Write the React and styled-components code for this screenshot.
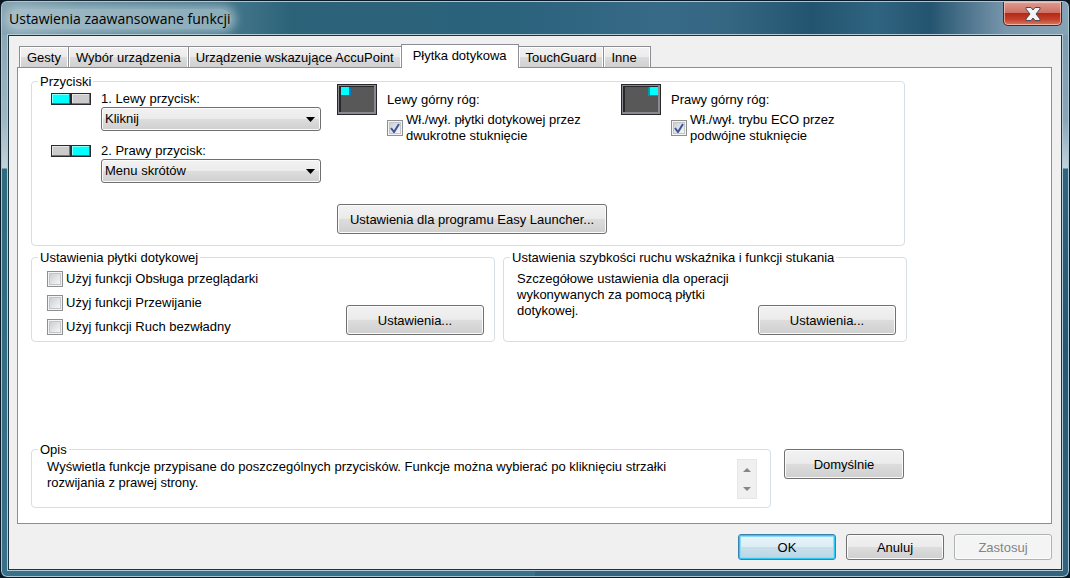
import React, { useState } from 'react'
import styled, { createGlobalStyle, css } from 'styled-components';

const TABS = ['Gesty', 'Wybór urządzenia', 'Urządzenie wskazujące AccuPoint', 'Płytka dotykowa', 'TouchGuard', 'Inne'];

const ButtonIcon = ({ side }) => (
    <svg width="40" height="12" viewBox="0 0 40 12" shapeRendering="crispEdges" aria-hidden="true">
        <rect width="40" height="12" fill="#2b2b2f" />
        {[0, 1].map(i => {
            const on = (side === 'left') === (i === 0);
            return (
                <g key={i}>
                    <rect x={1 + i * 20} y="1" width="18" height="10" fill={on ? '#0090a8' : '#77777b'} />
                    <rect x={1 + i * 20} y="1" width="17" height="9" fill={on ? '#8ff' : '#e6e6e6'} />
                    <rect x={2 + i * 20} y="2" width="16" height="8" fill={on ? '#0ff' : '#cbcbcb'} />
                </g>
            );
        })}
    </svg>
);

const PadIcon = ({ corner }) => (
    <svg width="40" height="31" viewBox="0 0 40 31" shapeRendering="crispEdges" aria-hidden="true">
        <rect width="40" height="31" fill="#28282c" />
        <rect x="1" y="1" width="38" height="29" fill="#8a8a90" />
        <rect x="2" y="2" width="35" height="26" fill="#28282c" />
        <rect x="4" y="3" width="33" height="25" fill="#585858" />
        {corner === 'left' ? (
            <>
                <rect x="4" y="3" width="10" height="9" fill="#0078b8" />
                <rect x="4" y="3" width="8" height="8" fill="#0ff" />
            </>
        ) : (
            <>
                <rect x="27" y="3" width="10" height="9" fill="#0098a8" />
                <rect x="29" y="3" width="8" height="8" fill="#0ff" />
            </>
        )}
    </svg>
);

const CloseIcon = () => (
    <svg width="16" height="14" viewBox="0 0 16 14" aria-hidden="true">
        <path
            d="M1 .5h5L8 3l2-2.500h5V2l-4 5 4 5v1.500h-5L8 11l-2 2.500H1V12l4-5-4-5z"
            fill="#f4f4f6" stroke="#4a4a58" strokeWidth="1" strokeLinejoin="round"
        />
    </svg>
);

const Check = ({ id, label, defaultChecked }) => (
    <CheckRow>
        <Checkbox id={id} defaultChecked={defaultChecked} />
        <label htmlFor={id}>{label}</label>
    </CheckRow>
);

const Assignment = ({ id, side, label, options }) => (
    <AssignmentRow>
        <ButtonIcon side={side} />
        <label htmlFor={id}>{label}</label>
        <Select id={id}>
            {options.map(o => <option key={o}>{o}</option>)}
        </Select>
    </AssignmentRow>
);

const Corner = ({ id, corner, title, label }) => (
    <CornerBox>
        <PadIcon corner={corner} />
        <CornerText>
            <p>{title}</p>
            <Check id={id} label={label} defaultChecked />
        </CornerText>
    </CornerBox>
);

export default function App() {
    const [tab, setTab] = useState(3);

    return (
        <Window>
            <GlobalStyle />
            <TitleBar>
                <Title>Ustawienia zaawansowane funkcji</Title>
                <CloseButton aria-label="Zamknij"><CloseIcon /></CloseButton>
            </TitleBar>
            <Client>
                <Tabs role="tablist">
                    {TABS.map((name, i) => (
                        <Tab key={name} role="tab" aria-selected={i === tab} $active={i === tab} onClick={() => setTab(i)}>
                            {name}
                        </Tab>
                    ))}
                </Tabs>
                <Panel role="tabpanel">
                    <ButtonsGroup>
                        <Legend>Przyciski</Legend>
                        <Assignments>
                            <Assignment id="left" side="left" label="1. Lewy przycisk:" options={['Kliknij', 'Menu skrótów']} />
                            <Assignment id="right" side="right" label="2. Prawy przycisk:" options={['Menu skrótów', 'Kliknij']} />
                        </Assignments>
                        <Corner
                            id="corner-left"
                            corner="left"
                            title="Lewy górny róg:"
                            label="Wł./wył. płytki dotykowej przez dwukrotne stuknięcie"
                        />
                        <Corner
                            id="corner-right"
                            corner="right"
                            title="Prawy górny róg:"
                            label="Wł./wył. trybu ECO przez podwójne stuknięcie"
                        />
                        <LauncherButton>Ustawienia dla programu Easy Launcher...</LauncherButton>
                    </ButtonsGroup>

                    <Row>
                        <SettingsGroup $size={464}>
                            <Legend>Ustawienia płytki dotykowej</Legend>
                            <CheckList>
                                <Check id="browse" label="Użyj funkcji Obsługa przeglądarki" />
                                <Check id="scroll" label="Użyj funkcji Przewijanie" />
                                <Check id="inertia" label="Użyj funkcji Ruch bezwładny" />
                            </CheckList>
                            <WideButton>Ustawienia...</WideButton>
                        </SettingsGroup>
                        <SettingsGroup $size={404}>
                            <Legend>Ustawienia szybkości ruchu wskaźnika i funkcji stukania</Legend>
                            <Note>Szczegółowe ustawienia dla operacji wykonywanych za pomocą płytki dotykowej.</Note>
                            <WideButton>Ustawienia...</WideButton>
                        </SettingsGroup>
                    </Row>

                    <BottomRow>
                        <DescriptionGroup>
                            <Legend>Opis</Legend>
                            <Description>
                                Wyświetla funkcje przypisane do poszczególnych przycisków. Funkcje można wybierać po kliknięciu strzałki rozwijania z prawej strony.
                            </Description>
                            <Scroller>
                                <ScrollArrow aria-label="W górę" disabled>
                                    <svg width="8" height="4" viewBox="0 0 8 4"><path d="M0 4L4 0l4 4z" fill="#85858a" /></svg>
                                </ScrollArrow>
                                <ScrollArrow aria-label="W dół" disabled>
                                    <svg width="8" height="4" viewBox="0 0 8 4"><path d="M0 0l4 4 4-4z" fill="#85858a" /></svg>
                                </ScrollArrow>
                            </Scroller>
                        </DescriptionGroup>
                        <DefaultsButton>Domyślnie</DefaultsButton>
                    </BottomRow>
                </Panel>
                <Footer>
                    <FooterButton $primary>OK</FooterButton>
                    <FooterButton>Anuluj</FooterButton>
                    <FooterButton disabled>Zastosuj</FooterButton>
                </Footer>
            </Client>
        </Window>
    );
}

const GlobalStyle = createGlobalStyle`
    * {
        box-sizing: border-box;
    }
    body {
        margin: 0;
        background: #0b1620;
        color: #000;
        font: 13px/16px "Liberation Sans", Arial, sans-serif;
    }
    p {
        margin: 0;
    }
    button, select {
        font: inherit;
        color: inherit;
    }
`;

const Window = styled.div`
    display: flex;
    flex-direction: column;
    min-height: 100vh;
    padding: 1px 7px 7px;
    border: 1px solid #0a1a26;
    border-radius: 7px;
    box-shadow: inset 0 0 0 1px #a9c6d2;
    background:
        linear-gradient(90deg, #84a2b0 0, #5f8a9b 80px, #3f7388 240px, #2d6379 290px, #2b627c 48%, #376a87 62%, #356783 68%, #23546f 76%, #2f6480 82%, #24546f 87%, #7896ac 94%, #86a2b6 100%) top / 100% 34px no-repeat,
        linear-gradient(#84a2b0 0, #9fb7c2 120px, #c3d2d9 167px, #2f6a7e 168px, #39708a 100%) left / 50% 100% no-repeat,
        linear-gradient(#7896ac 0, #8ba5b8 120px, #c3d2dc 167px, #2f6480 168px, #265673 60%, #33647f 100%) right / 50% 100% no-repeat;
`;

const TitleBar = styled.header`
    display: flex;
    justify-content: space-between;
    align-items: flex-start;
    height: 33px;
`;

const Title = styled.h1`
    margin: 7px 0 0;
    padding: 0 1px;
    border-radius: 10px;
    background: rgba(190, 210, 218, 0.6);
    box-shadow: 0 0 8px 4px rgba(190, 210, 218, 0.6);
    font: 14px/20px "Open Sans", "Noto Sans", sans-serif;
`;

const CloseButton = styled.button`
    display: flex;
    align-items: center;
    justify-content: center;
    width: 59px;
    height: 24px;
    padding: 0;
    border: 1px solid #4a2430;
    border-top: 0;
    border-radius: 0 0 5px 5px;
    box-shadow: inset 0 0 0 1px rgba(255, 220, 210, 0.6);
    background: linear-gradient(#dd9c92 0, #cf6f62 48%, #b52a16 50%, #c2402c 75%, #d87a60 100%);
`;

const Client = styled.main`
    display: flex;
    flex: 1;
    flex-direction: column;
    padding: 8px 9px 9px 8px;
    border: 1px solid #1c3340;
    outline: 1px solid #b4ccd6;
    background: #f0f0f0;
`;

const Tabs = styled.div`
    display: flex;
    align-items: flex-end;
    height: 24px;
    padding-left: 2px;
`;

const Tab = styled.button`
    height: 22px;
    margin-right: -1px;
    padding: 0 7px;
    border: 1px solid #8c8e94;
    border-bottom: 0;
    box-shadow: inset 1px 1px 0 #fff, inset -1px 0 0 #fff;
    background: linear-gradient(#f2f2f2 0, #ebebeb 50%, #dcdcdc 50%, #cfcfcf 100%);
    white-space: nowrap;

    &:last-child {
        padding-right: 13px;
    }

    ${({ $active }) => $active && css`
        position: relative;
        height: 24px;
        padding: 0 11px 2px;
        box-shadow: none;
        background: #fff;
    `}
`;

const Panel = styled.section`
    display: flex;
    flex: 1;
    flex-direction: column;
    gap: 11px;
    margin-top: -1px;
    padding: 13px 13px 15px;
    border: 1px solid #8c8e94;
    background: #fff;
`;

const Group = styled.fieldset`
    position: relative;
    min-width: 0;
    margin: 0;
    border: 1px solid #d5dfe5;
    border-radius: 4px;
`;

/* sits on the top border of its group */
const Legend = styled.legend`
    position: absolute;
    top: -8px;
    left: 6px;
    padding: 0 2px;
    background: #fff;
`;

const ButtonsGroup = styled(Group)`
    display: grid;
    grid-template-columns: 270px 1fr 1fr;
    column-gap: 16px;
    row-gap: 21px;
    max-width: 874px;
    padding: 2px 15px 11px 19px;
`;

const Assignments = styled.div`
    display: flex;
    flex-direction: column;
    gap: 12px;
    padding-top: 7px;
`;

const AssignmentRow = styled.div`
    display: grid;
    grid-template-columns: 40px 1fr;
    column-gap: 10px;
    align-items: center;
`;

const Select = styled.select`
    grid-column: 2;
    height: 24px;
    padding: 0 3px;
    border: 1px solid #707070;
    border-radius: 3px;
    box-shadow: inset 0 0 0 1px #fbfbfb;
    appearance: none;
    background:
        url("data:image/svg+xml,%3Csvg xmlns='http://www.w3.org/2000/svg' width='9' height='5'%3E%3Cpath d='M0 0h9L4.500 5z'/%3E%3C/svg%3E") right 5px center no-repeat,
        linear-gradient(#f2f2f2 0, #ebebeb 50%, #dddddd 50%, #cfcfcf 100%);
`;

const CornerBox = styled.div`
    display: flex;
    gap: 10px;

    > svg {
        flex: none;
    }
`;

const CornerText = styled.div`
    display: flex;
    flex-direction: column;
    gap: 4px;
    max-width: 260px;
    padding-top: 8px;
`;

const CheckRow = styled.div`
    display: flex;
    align-items: center;
    gap: 3px;
`;

const Checkbox = styled.input.attrs({ type: 'checkbox' })`
    flex: none;
    width: 16px;
    height: 16px;
    margin: 0;
    border: 1px solid #8e8f8f;
    appearance: none;
    box-shadow: inset 0 0 0 1px #f4f4f4, inset 0 0 0 2px #c2c5ca;
    background: linear-gradient(135deg, #cbcfd5 15%, #f6f6f6 85%);

    &:checked {
        background:
            url("data:image/svg+xml,%3Csvg xmlns='http://www.w3.org/2000/svg' width='10' height='10'%3E%3Cpath d='M1 5l3 4 5-8' fill='none' stroke='%233f5597' stroke-width='2'/%3E%3C/svg%3E") center no-repeat,
            linear-gradient(135deg, #cbcfd5 15%, #f6f6f6 85%);
    }
`;

const Button = styled.button`
    flex: none;
    height: 30px;
    padding: 1px 9px 0;
    border: 1px solid #707070;
    border-radius: 3px;
    box-shadow: inset 0 0 0 1px #fbfbfb;
    background: linear-gradient(#f2f2f2 0, #ebebeb 48%, #dddddd 50%, #cfcfcf 100%);
    white-space: nowrap;

    &:disabled {
        border-color: #adb2b5;
        background: #f4f4f4;
        color: #838383;
    }
`;

const LauncherButton = styled(Button)`
    grid-column: 2 / 4;
    justify-self: start;
    min-width: 270px;
`;

const WideButton = styled(Button)`
    width: 138px;
`;

const DefaultsButton = styled(Button)`
    width: 120px;
`;

const FooterButton = styled(Button)`
    width: 98px;
    height: 26px;

    ${({ $primary }) => $primary && css`
        border-color: #3c7fb1;
        box-shadow: inset 0 0 0 1px #2fc8f5, inset 0 0 0 2px #8adcf7;
        background: linear-gradient(#eaf4f9 0, #dcedf5 48%, #c8e0ec 50%, #b9d6e4 100%);
    `}
`;

const Row = styled.div`
    display: flex;
    gap: 8px;
    max-width: 876px;
`;

const SettingsGroup = styled(Group)`
    display: flex;
    flex: ${({ $size }) => `${$size} 1 ${$size}px`};
    align-items: flex-end;
    justify-content: space-between;
    padding: 13px 10px 6px 13px;
`;

const CheckList = styled.div`
    display: flex;
    flex-direction: column;
    gap: 8px;
    padding-left: 2px;
`;

const Note = styled.p`
    align-self: flex-start;
    max-width: 230px;
`;

const BottomRow = styled.div`
    display: flex;
    align-items: flex-start;
    gap: 13px;
    max-width: 873px;
    margin-top: auto;
`;

const DescriptionGroup = styled(Group)`
    display: flex;
    flex: 1;
    gap: 40px;
    padding: 9px 13px 8px 15px;
`;

const Description = styled.p`
    flex: 1;
`;

const Scroller = styled.div`
    display: flex;
    flex-direction: column;
    width: 20px;
    height: 40px;
    border: 1px solid #e6e6e6;
    background: #f0f0f0;
`;

const ScrollArrow = styled.button`
    display: flex;
    flex: 1;
    align-items: center;
    justify-content: center;
    padding: 0;
    border: 0;
    background: none;
`;

const Footer = styled.footer`
    display: flex;
    justify-content: flex-end;
    gap: 10px;
    padding-top: 10px;
`;
